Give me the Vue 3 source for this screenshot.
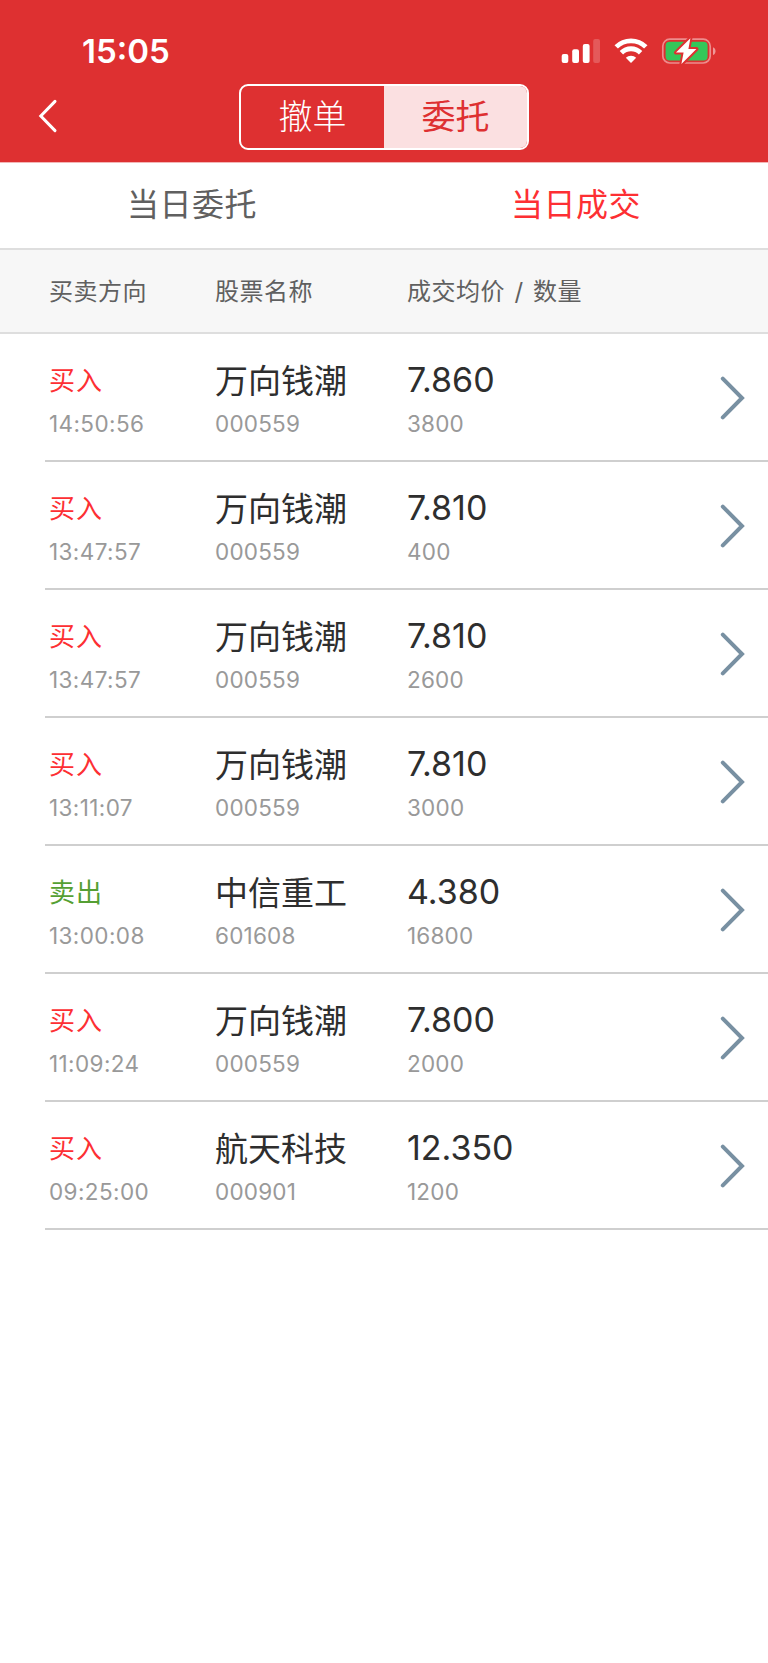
<script setup>
import { ref } from "vue";

const mode = ref("entrust");
const activeTab = ref("deals");

const modes = [
  { key: "cancel", label: "撤单" },
  { key: "entrust", label: "委托" },
];

const tabs = [
  { key: "orders", label: "当日委托" },
  { key: "deals", label: "当日成交" },
];

const deals = ref([
  { side: "buy", time: "14:50:56", name: "万向钱潮", code: "000559", price: "7.860", amount: 3800 },
  { side: "buy", time: "13:47:57", name: "万向钱潮", code: "000559", price: "7.810", amount: 400 },
  { side: "buy", time: "13:47:57", name: "万向钱潮", code: "000559", price: "7.810", amount: 2600 },
  { side: "buy", time: "13:11:07", name: "万向钱潮", code: "000559", price: "7.810", amount: 3000 },
  { side: "sell", time: "13:00:08", name: "中信重工", code: "601608", price: "4.380", amount: 16800 },
  { side: "buy", time: "11:09:24", name: "万向钱潮", code: "000559", price: "7.800", amount: 2000 },
  { side: "buy", time: "09:25:00", name: "航天科技", code: "000901", price: "12.350", amount: 1200 },
]);
</script>

<template>
  <div class="page">
    <header class="header">
      <div class="status-bar">
        <span class="clock">15:05</span>
        <div class="status-icons">
          <svg class="signal" width="40" height="26" viewBox="0 0 40 26">
            <rect x="0.7" y="16" width="6.6" height="9" rx="2" fill="#fff" />
            <rect x="11.2" y="11.2" width="6.8" height="13.8" rx="2" fill="#fff" />
            <rect x="21.8" y="6" width="6.8" height="19" rx="2" fill="#fff" />
            <rect x="32.2" y="1" width="6.8" height="24" rx="2" fill="#fff" fill-opacity="0.2" />
          </svg>
          <svg class="wifi" width="34" height="26" viewBox="0 0 34 26">
            <g fill="none" stroke="#fff" stroke-width="4.8">
              <path d="M2.2 8.9a21 21 0 0 1 29.6 0" />
              <path d="M7.4 14.7a13.6 13.6 0 0 1 19.2 0" />
            </g>
            <path d="M17 25l-5.2-5.2a7.4 7.4 0 0 1 10.4 0z" fill="#fff" />
          </svg>
          <svg class="battery" width="56" height="30" viewBox="0 0 56 30">
            <rect x="1.8" y="3.2" width="47.4" height="23.8" rx="7" fill="none" stroke="#fff" stroke-opacity="0.45" stroke-width="1.7" />
            <path d="M52 11.2v7.8c3.4-1.2 3.4-6.6 0-7.8z" fill="#fff" fill-opacity="0.5" />
            <rect x="4.6" y="5.8" width="42" height="18.6" rx="4" fill="#34c759" />
            <path class="bolt" d="M29.4 2.2L15 16.6h7.6L20.4 28 35.4 13h-8z" />
          </svg>
        </div>
      </div>
      <div class="nav-bar">
        <svg class="back" width="20" height="34" viewBox="0 0 20 34">
          <path d="M17 2.4L2.8 17 17 31.6" />
        </svg>
        <div class="segment">
          <button
            v-for="item in modes"
            :key="item.key"
            :class="{ active: mode === item.key }"
            @click="mode = item.key"
          >
            {{ item.label }}
          </button>
        </div>
      </div>
    </header>

    <nav class="tabs">
      <button
        v-for="tab in tabs"
        :key="tab.key"
        :class="{ active: activeTab === tab.key }"
        @click="activeTab = tab.key"
      >
        {{ tab.label }}
      </button>
    </nav>

    <div class="columns">
      <span>买卖方向</span>
      <span>股票名称</span>
      <span>成交均价 / 数量</span>
    </div>

    <ul class="list">
      <li v-for="(deal, index) in deals" :key="index" class="row">
        <div class="cell">
          <span class="side" :class="deal.side">{{ deal.side === "buy" ? "买入" : "卖出" }}</span>
          <span class="sub time">{{ deal.time }}</span>
        </div>
        <div class="cell">
          <span class="name">{{ deal.name }}</span>
          <span class="sub">{{ deal.code }}</span>
        </div>
        <div class="cell">
          <span class="price">{{ deal.price }}</span>
          <span class="sub">{{ deal.amount }}</span>
        </div>
        <svg class="arrow" width="26" height="46" viewBox="0 0 26 46">
          <path d="M2.8 3.6L22 23 2.8 42.4" />
        </svg>
      </li>
    </ul>
  </div>
</template>

<style>
body {
  margin: 0;
  background: #fff;
}
</style>

<style scoped>
.page {
  min-height: 1663px;
  background: #fff;
  font-family: Inter, "Noto Sans CJK SC", sans-serif;
  color: #2e2e2e;
}
button {
  padding: 0;
  border: none;
  background: none;
  font-family: inherit;
  cursor: pointer;
}
.header {
  height: 162px;
  background: #de3031;
  border-bottom: 1px solid #f3b6b6;
  color: #fff;
}
.status-bar {
  display: flex;
  justify-content: space-between;
  height: 84px;
  padding: 0 51px 0 82px;
}
.clock {
  margin-top: 30px;
  font-size: 33px;
  font-weight: 600;
  line-height: 42px;
}
.status-icons {
  display: flex;
  align-items: flex-start;
  padding-top: 38px;
}
.wifi {
  margin-left: 13px;
}
.battery {
  margin: -2px 0 0 13px;
}
.bolt {
  fill: #fff;
  stroke: #de3031;
  stroke-width: 4;
  paint-order: stroke;
  stroke-linejoin: round;
}
.nav-bar {
  display: grid;
  grid-template-columns: 1fr auto 1fr;
  align-items: start;
}
.back {
  margin: 15px 0 0 38px;
  fill: none;
  stroke: #fff;
  stroke-width: 3;
  stroke-linecap: round;
}
.segment {
  display: grid;
  grid-template-columns: 1fr 1fr;
  box-sizing: border-box;
  width: 290px;
  height: 66px;
  border: 2px solid #fff;
  border-radius: 9px;
  overflow: hidden;
}
.segment button {
  padding-bottom: 6px;
  font-size: 34px;
  font-weight: 300;
  color: #fff;
}
.segment .active {
  background: #fbe0e1;
  color: #de3031;
  font-weight: 400;
}
.tabs {
  display: flex;
  height: 85px;
  border-bottom: 2px solid #dedede;
}
.tabs button {
  flex: 1;
  padding-bottom: 8px;
  font-size: 32px;
  font-weight: 400;
  letter-spacing: 0.5px;
  color: #606060;
}
.tabs .active {
  color: #fd2f33;
}
.columns {
  display: grid;
  grid-template-columns: 166px 192px 1fr;
  align-items: center;
  box-sizing: border-box;
  height: 84px;
  padding: 0 0 4px 49px;
  border-bottom: 2px solid #dedede;
  background: #f7f7f7;
  font-size: 24px;
  letter-spacing: 0.5px;
  word-spacing: 2.2px;
  color: #606060;
}
.list {
  margin: 0;
  padding: 0 0 0 45px;
  list-style: none;
}
.row {
  display: grid;
  grid-template-columns: 166px 192px 1fr auto;
  box-sizing: border-box;
  height: 128px;
  padding: 23px 22px 0 4px;
  border-bottom: 2px solid #cfcfcf;
}
.cell {
  display: flex;
  flex-direction: column;
}
.side,
.name,
.price {
  height: 48px;
  line-height: 48px;
  white-space: nowrap;
}
.side {
  font-size: 26px;
  letter-spacing: 1px;
}
.buy {
  color: #fd2f33;
}
.sell {
  color: #559f33;
}
.name {
  font-size: 33px;
}
.price {
  font-size: 34px;
  line-height: 46px;
}
.sub {
  height: 34px;
  font-size: 22.5px;
  line-height: 38px;
  letter-spacing: 0.2px;
  color: #999;
}
.time {
  letter-spacing: 0.4px;
}
.arrow {
  margin-top: 18px;
  fill: none;
  stroke: #7890a2;
  stroke-width: 4;
  stroke-linecap: round;
}
</style>
